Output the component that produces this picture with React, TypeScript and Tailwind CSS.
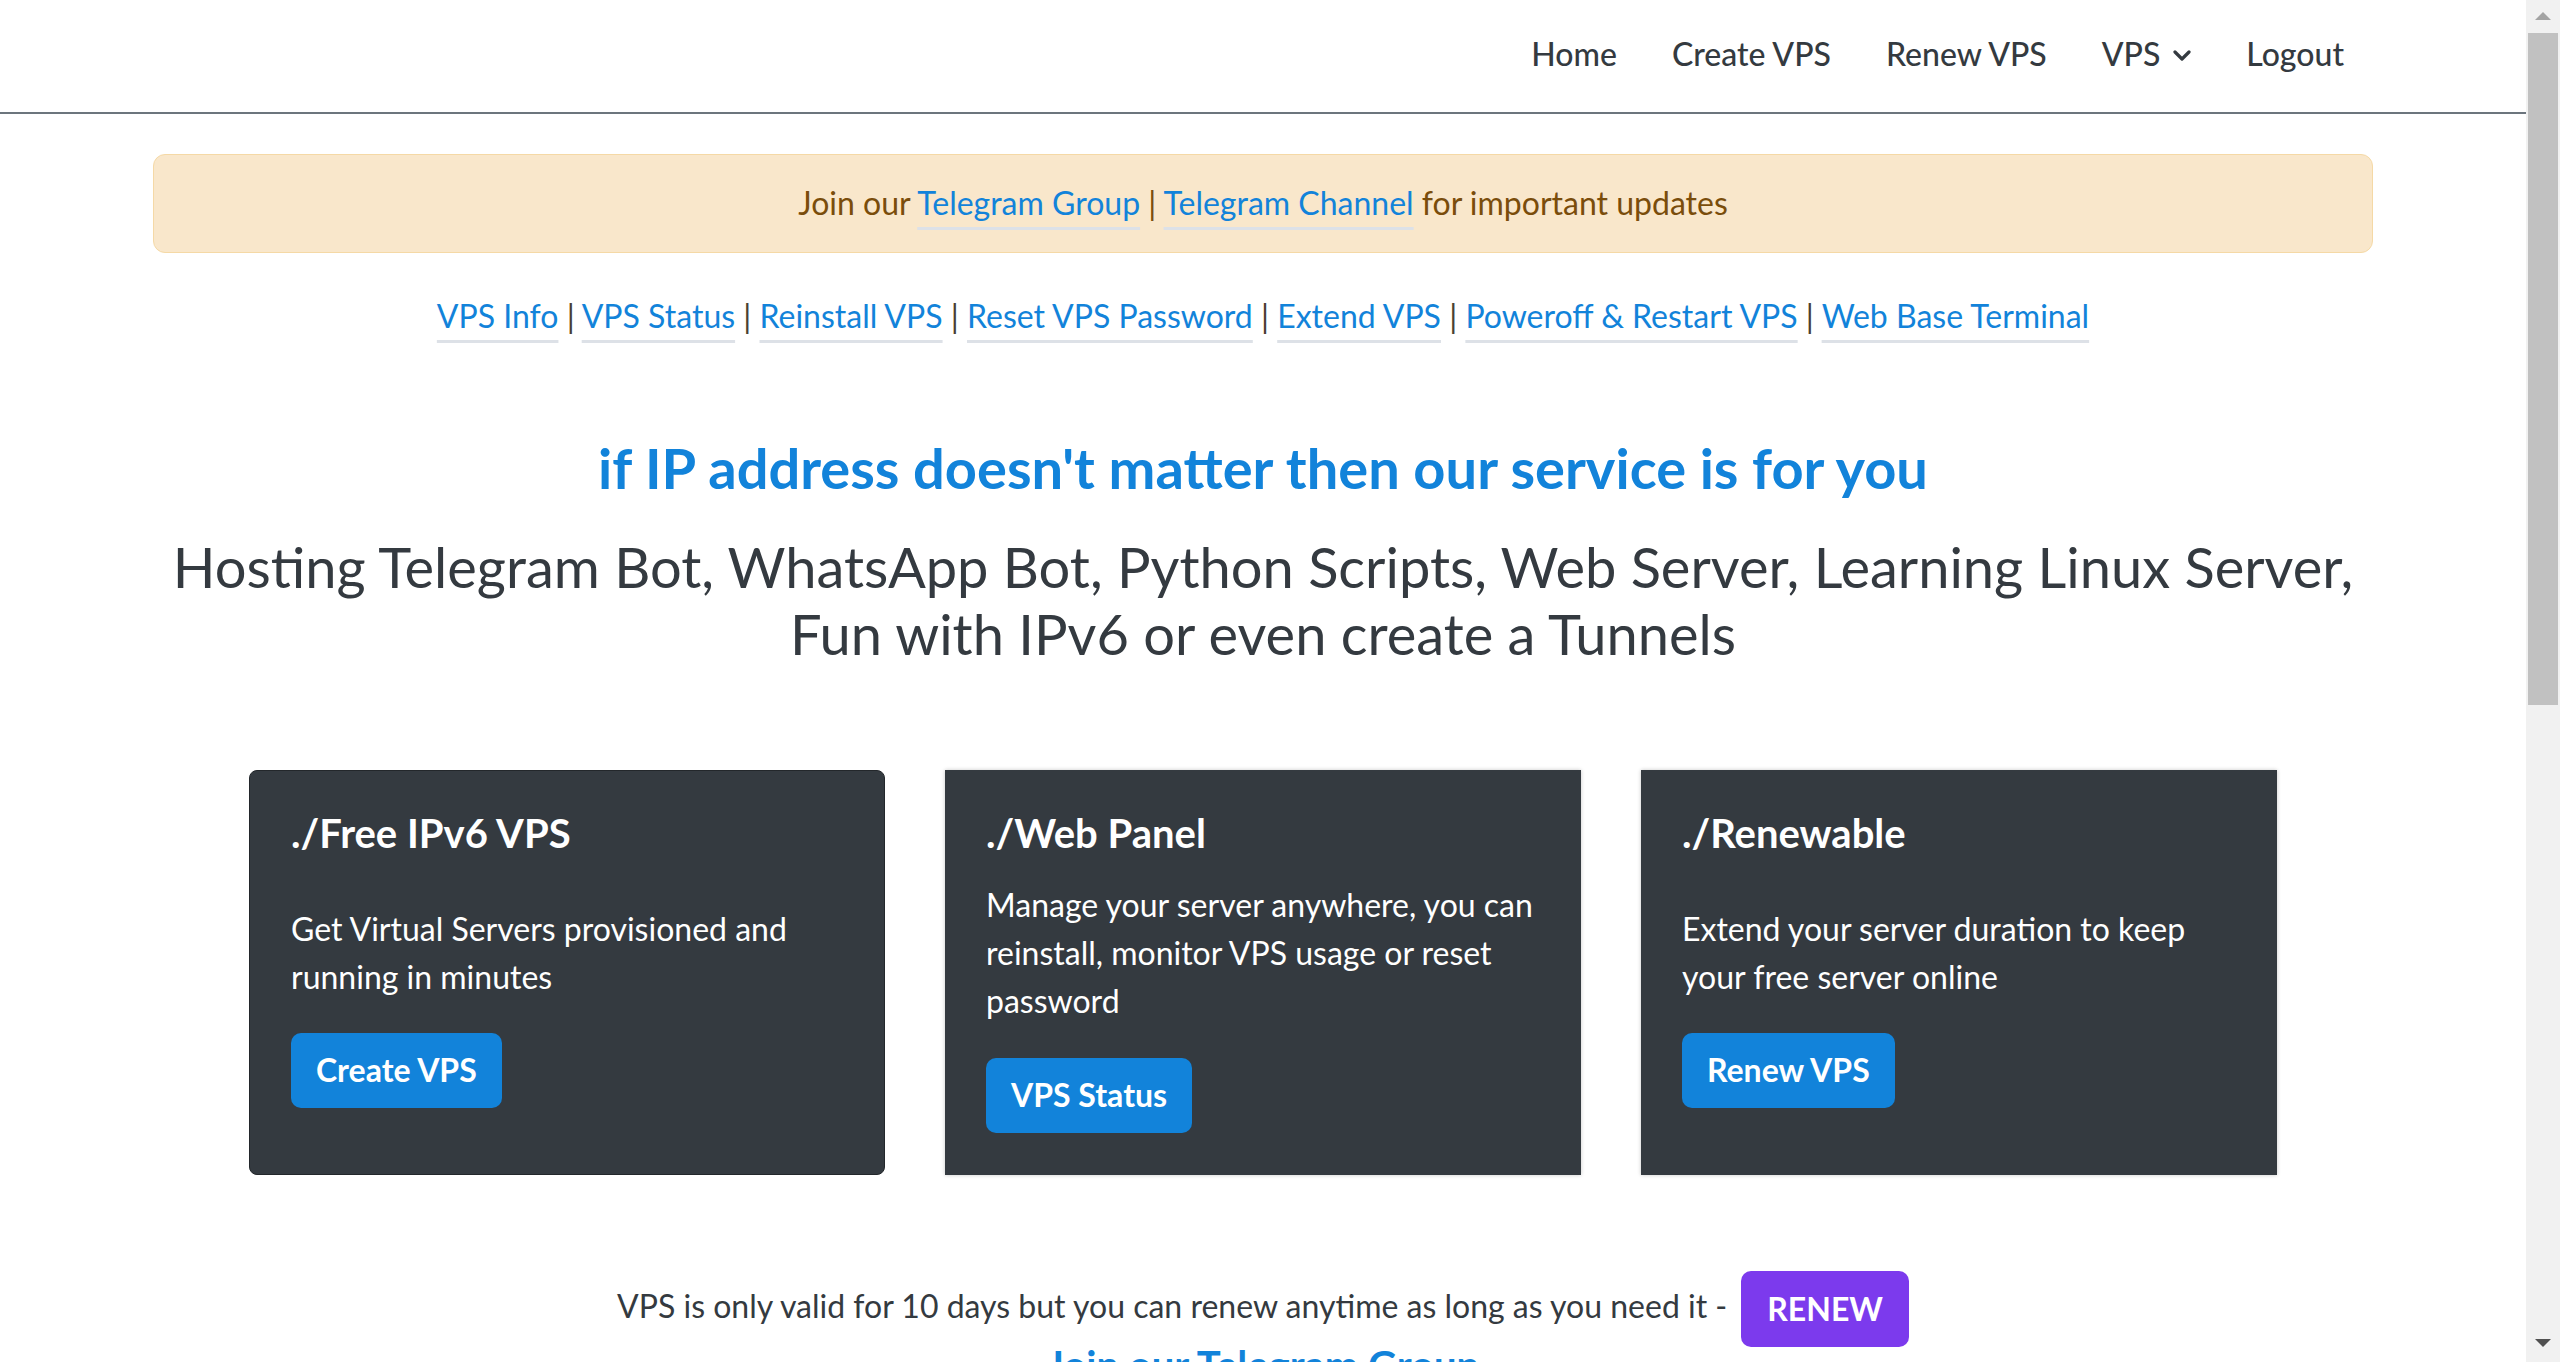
import React from "react";

const linkCls =
  "text-[#1283da] underline decoration-[#dde1e7] decoration-[3px] underline-offset-[12px]";

function Sep({ color }: { color: string }) {
  return <span className={color}> | </span>;
}

function Chevron() {
  return (
    <svg width="18" height="11" viewBox="0 0 18 11" fill="none" className="mt-[2px]">
      <polyline points="2,2 9,9 16,2" stroke="#343a40" strokeWidth="3.2" strokeLinecap="round" strokeLinejoin="round" />
    </svg>
  );
}

function CardButton({ children }: { children: React.ReactNode }) {
  return (
    <a className="self-start inline-flex h-[75px] items-center rounded-[10px] bg-[#1283da] px-[25px] text-[32px] leading-[48px] font-bold text-white">
      {children}
    </a>
  );
}

export default function App() {
  return (
    <div className="flex h-screen w-full overflow-hidden bg-white [font-family:Lato,sans-serif]">
      <main className="h-full min-w-0 flex-1 overflow-hidden">
        <nav className="flex h-[114px] items-center justify-end gap-[55px] border-b-2 border-[#6c757d] pb-[4px] pr-[182px] text-[32px] font-medium leading-[48px] text-[#343a40]">
          <a>Home</a>
          <a>Create VPS</a>
          <a>Renew VPS</a>
          <a className="flex items-center gap-[13px]">
            VPS
            <Chevron />
          </a>
          <a>Logout</a>
        </nav>

        <div className="mx-auto w-[2220px]">
          <div className="mt-[40px] flex h-[99px] items-center justify-center rounded-[12px] border border-[#f5d9a6] bg-[#f9e7cb] pb-[2px] text-[32px] leading-[48px] text-[#7a4d0b]">
            <span>
              Join our <a className={linkCls}>Telegram Group</a>
              <span> | </span>
              <a className={linkCls}>Telegram Channel</a> for important updates
            </span>
          </div>

          <div className="mt-[39px] text-center text-[32px] leading-[48px] text-[#4a3f33]">
            <a className={linkCls}>VPS Info</a>
            <Sep color="text-[#4a3f33]" />
            <a className={linkCls}>VPS Status</a>
            <Sep color="text-[#4a3f33]" />
            <a className={linkCls}>Reinstall VPS</a>
            <Sep color="text-[#4a3f33]" />
            <a className={linkCls}>Reset VPS Password</a>
            <Sep color="text-[#4a3f33]" />
            <a className={linkCls}>Extend VPS</a>
            <Sep color="text-[#4a3f33]" />
            <a className={linkCls}>Poweroff &amp; Restart VPS</a>
            <Sep color="text-[#4a3f33]" />
            <a className={linkCls}>Web Base Terminal</a>
          </div>

          <h3 className="mt-[94px] text-center text-[56px] font-bold leading-[1.2] text-[#1283da]">
            if IP address doesn't matter then our service is for you
          </h3>
          <p className="mt-[32px] text-center text-[56px] leading-[1.2] text-[#343a40]">
            Hosting Telegram Bot, WhatsApp Bot, Python Scripts, Web Server, Learning Linux Server, Fun with IPv6 or even
            create a Tunnels
          </p>

          <div className="mx-auto mt-[102px] grid w-[2028px] grid-cols-3 gap-[60px]">
            <div className="flex flex-col rounded-[8px] border border-[#23272b] bg-[#343a40] pb-[41px] pl-[41px] pr-[30px] pt-[38px] text-white">
              <h5 className="text-[40px] font-bold leading-[48px]">./Free IPv6 VPS</h5>
              <p className="mb-[32px] mt-[48px] text-[32px] leading-[48px]">
                Get Virtual Servers provisioned and running in minutes
              </p>
              <CardButton>Create VPS</CardButton>
            </div>
            <div className="flex flex-col bg-[#343a40] pb-[42px] pl-[41px] pr-[30px] pt-[39px] text-white shadow-[0_0_4px_rgba(0,0,0,0.22)]">
              <h5 className="text-[40px] font-bold leading-[48px]">./Web Panel</h5>
              <p className="mb-[33px] mt-[24px] text-[32px] leading-[48px]">
                Manage your server anywhere, you can reinstall, monitor VPS usage or reset password
              </p>
              <CardButton>VPS Status</CardButton>
            </div>
            <div className="flex flex-col bg-[#343a40] pb-[42px] pl-[41px] pr-[30px] pt-[39px] text-white shadow-[0_0_4px_rgba(0,0,0,0.22)]">
              <h5 className="text-[40px] font-bold leading-[48px]">./Renewable</h5>
              <p className="mb-[32px] mt-[48px] text-[32px] leading-[48px]">
                Extend your server duration to keep your free server online
              </p>
              <CardButton>Renew VPS</CardButton>
            </div>
          </div>

          <div className="mt-[96px] flex items-center justify-center gap-[14px] text-[32px] leading-[48px] text-[#343a40]">
            <span className="mb-[6px]">
              VPS is only valid for 10 days but you can renew anytime as long as you need it -
            </span>
            <a className="flex h-[76px] items-center rounded-[10px] bg-[#7c3aed] px-[26px] font-bold text-white">RENEW</a>
          </div>

          <div className="text-center text-[40px] font-bold leading-[36px] text-[#1283da]">
            <a>Join our Telegram Group</a>
          </div>
        </div>
      </main>

      <aside className="flex h-full w-[34px] shrink-0 flex-col bg-[#f1f1f1]">
        <div className="flex h-[33px] items-center justify-center pb-[1px]">
          <svg width="16" height="8" viewBox="0 0 16 8">
            <polygon points="8,0 16,8 0,8" fill="#a3a3a3" />
          </svg>
        </div>
        <div className="ml-[2px] h-[672px] w-[30px] bg-[#c1c1c1]" />
        <div className="flex-1" />
        <div className="flex h-[33px] items-center justify-center pb-[6px]">
          <svg width="16" height="8" viewBox="0 0 16 8">
            <polygon points="0,0 16,0 8,8" fill="#505050" />
          </svg>
        </div>
      </aside>
    </div>
  );
}
